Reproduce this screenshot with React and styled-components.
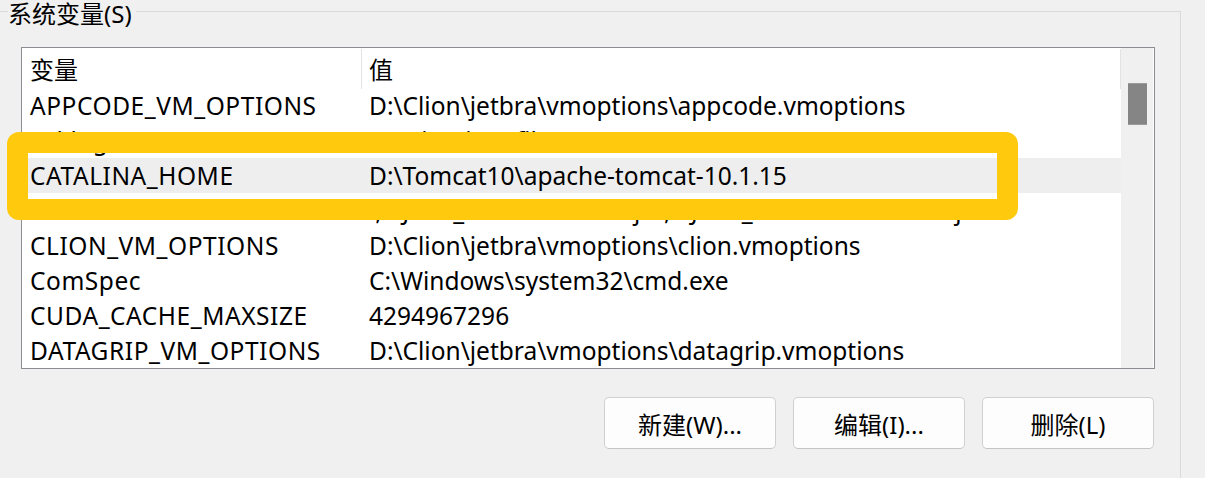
import React from "react";
import styled, { createGlobalStyle } from "styled-components";

const GlobalStyle = createGlobalStyle`
  html, body { margin: 0; padding: 0; background: #f0f0f0; }
  body { font-family: "Noto Sans", "Noto Sans CJK SC", sans-serif; }
`;

const FONT = `"Noto Sans", "Noto Sans CJK SC", sans-serif`;

const Page = styled.div`
  position: relative;
  width: 1205px;
  height: 478px;
  overflow: hidden;
  background: #f0f0f0;
  font-family: ${FONT};
  color: #000;
`;

const Group = styled.div`
  box-sizing: border-box;
  margin: 11px 0 0 -10px;
  width: 1191px;
  height: 467px;
  border-top: 1px solid #dadada;
  border-right: 1px solid #dadada;
  display: flex;
  flex-direction: column;
  align-items: flex-start;
`;

const Title = styled.div`
  margin: -10px 0 0 18px;
  padding: 0 4px 0 0;
  background: #f0f0f0;
  font-size: 24px;
  line-height: 24px;
  height: 24px;
  white-space: nowrap;
`;

const ListBox = styled.div`
  box-sizing: border-box;
  margin: 21px 0 0 31px;
  width: 1134px;
  height: 322px;
  border: 1px solid #8b8d93;
  background: #fff;
  display: flex;
`;

const ListContent = styled.div`
  flex: 1;
  overflow: hidden;
  display: flex;
  flex-direction: column;
`;

const Row = styled.div`
  display: grid;
  grid-template-columns: 340px 1fr;
  height: ${(p) => (p.$header ? 40 : 35)}px;
  flex: none;
  align-items: center;
  background: ${(p) => (p.$selected ? "#eeeeee" : "transparent")};
  font-size: 24.5px;
  white-space: nowrap;
`;

const NameCell = styled.div`
  padding-left: 8px;
  height: 100%;
  display: flex;
  align-items: center;
  letter-spacing: ${(p) => (p.$header ? 0 : 0.55)}px;
  ${(p) => p.$header && "box-shadow: inset -1px 0 0 #e3e3e3; margin-top: 1px;"}
`;

const ValueCell = styled.div`
  padding-left: 7px;
  height: 100%;
  display: flex;
  align-items: center;
  ${(p) => p.$header && "box-shadow: inset -1px 0 0 #e3e3e3; margin-top: 1px;"}
`;

const HeaderLabel = styled.span`
  font-size: 24px;
  font-family: "Noto Sans CJK SC", sans-serif;
`;

const Scrollbar = styled.div`
  width: 33px;
  flex: none;
  background: #f0f0f0;
  border-right: 1px solid #ffffff;
  display: flex;
  justify-content: flex-start;
  padding-top: 35px;
  padding-left: 7px;
  box-sizing: border-box;
`;

const Thumb = styled.div`
  width: 19px;
  height: 42px;
  background: #858585;
  border-top: 1px solid #9a9a9a;
  border-bottom: 1px solid #9a9a9a;
  box-sizing: border-box;
`;

const ButtonRow = styled.div`
  margin: 28px 0 0 31px;
  width: 1133px;
  display: flex;
  justify-content: flex-end;
  gap: 17px;
`;

const Button = styled.button`
  box-sizing: border-box;
  width: 172px;
  height: 52px;
  background: #fdfdfd;
  border: 1px solid #d0d0d0;
  border-bottom-color: #c4c4c4;
  border-radius: 5px;
  font-family: ${FONT};
  font-size: 24px;
  color: #000;
  padding: 0;
  display: flex;
  align-items: center;
  justify-content: center;
`;

const Highlight = styled.div`
  position: absolute;
  left: 7px;
  top: 132px;
  width: 1011px;
  height: 88px;
  box-sizing: border-box;
  border: 21px solid #ffc90e;
  border-radius: 12px;
  pointer-events: none;
`;

const rows = [
  ["APPCODE_VM_OPTIONS", "D:\\Clion\\jetbra\\vmoptions\\appcode.vmoptions"],
  ["asl.log", "Destination=file"],
  ["CATALINA_HOME", "D:\\Tomcat10\\apache-tomcat-10.1.15", true],
  ["CLASSPATH", ".;%JAVA_HOME%\\lib\\dt.jar;%JAVA_HOME%\\lib\\tools.jar"],
  ["CLION_VM_OPTIONS", "D:\\Clion\\jetbra\\vmoptions\\clion.vmoptions"],
  ["ComSpec", "C:\\Windows\\system32\\cmd.exe"],
  ["CUDA_CACHE_MAXSIZE", "4294967296"],
  ["DATAGRIP_VM_OPTIONS", "D:\\Clion\\jetbra\\vmoptions\\datagrip.vmoptions"],
];

export default function App() {
  return (
    <>
      <GlobalStyle />
      <Page>
        <Group>
          <Title>系统变量(S)</Title>
          <ListBox>
            <ListContent>
              <Row $header>
                <NameCell $header>
                  <HeaderLabel>变量</HeaderLabel>
                </NameCell>
                <ValueCell $header>
                  <HeaderLabel>值</HeaderLabel>
                </ValueCell>
              </Row>
              {rows.map(([name, value, sel]) => (
                <Row key={name} $selected={sel}>
                  <NameCell>{name}</NameCell>
                  <ValueCell>{value}</ValueCell>
                </Row>
              ))}
            </ListContent>
            <Scrollbar>
              <Thumb />
            </Scrollbar>
          </ListBox>
          <ButtonRow>
            <Button>新建(W)...</Button>
            <Button>编辑(I)...</Button>
            <Button>删除(L)</Button>
          </ButtonRow>
        </Group>
        <Highlight />
      </Page>
    </>
  );
}
